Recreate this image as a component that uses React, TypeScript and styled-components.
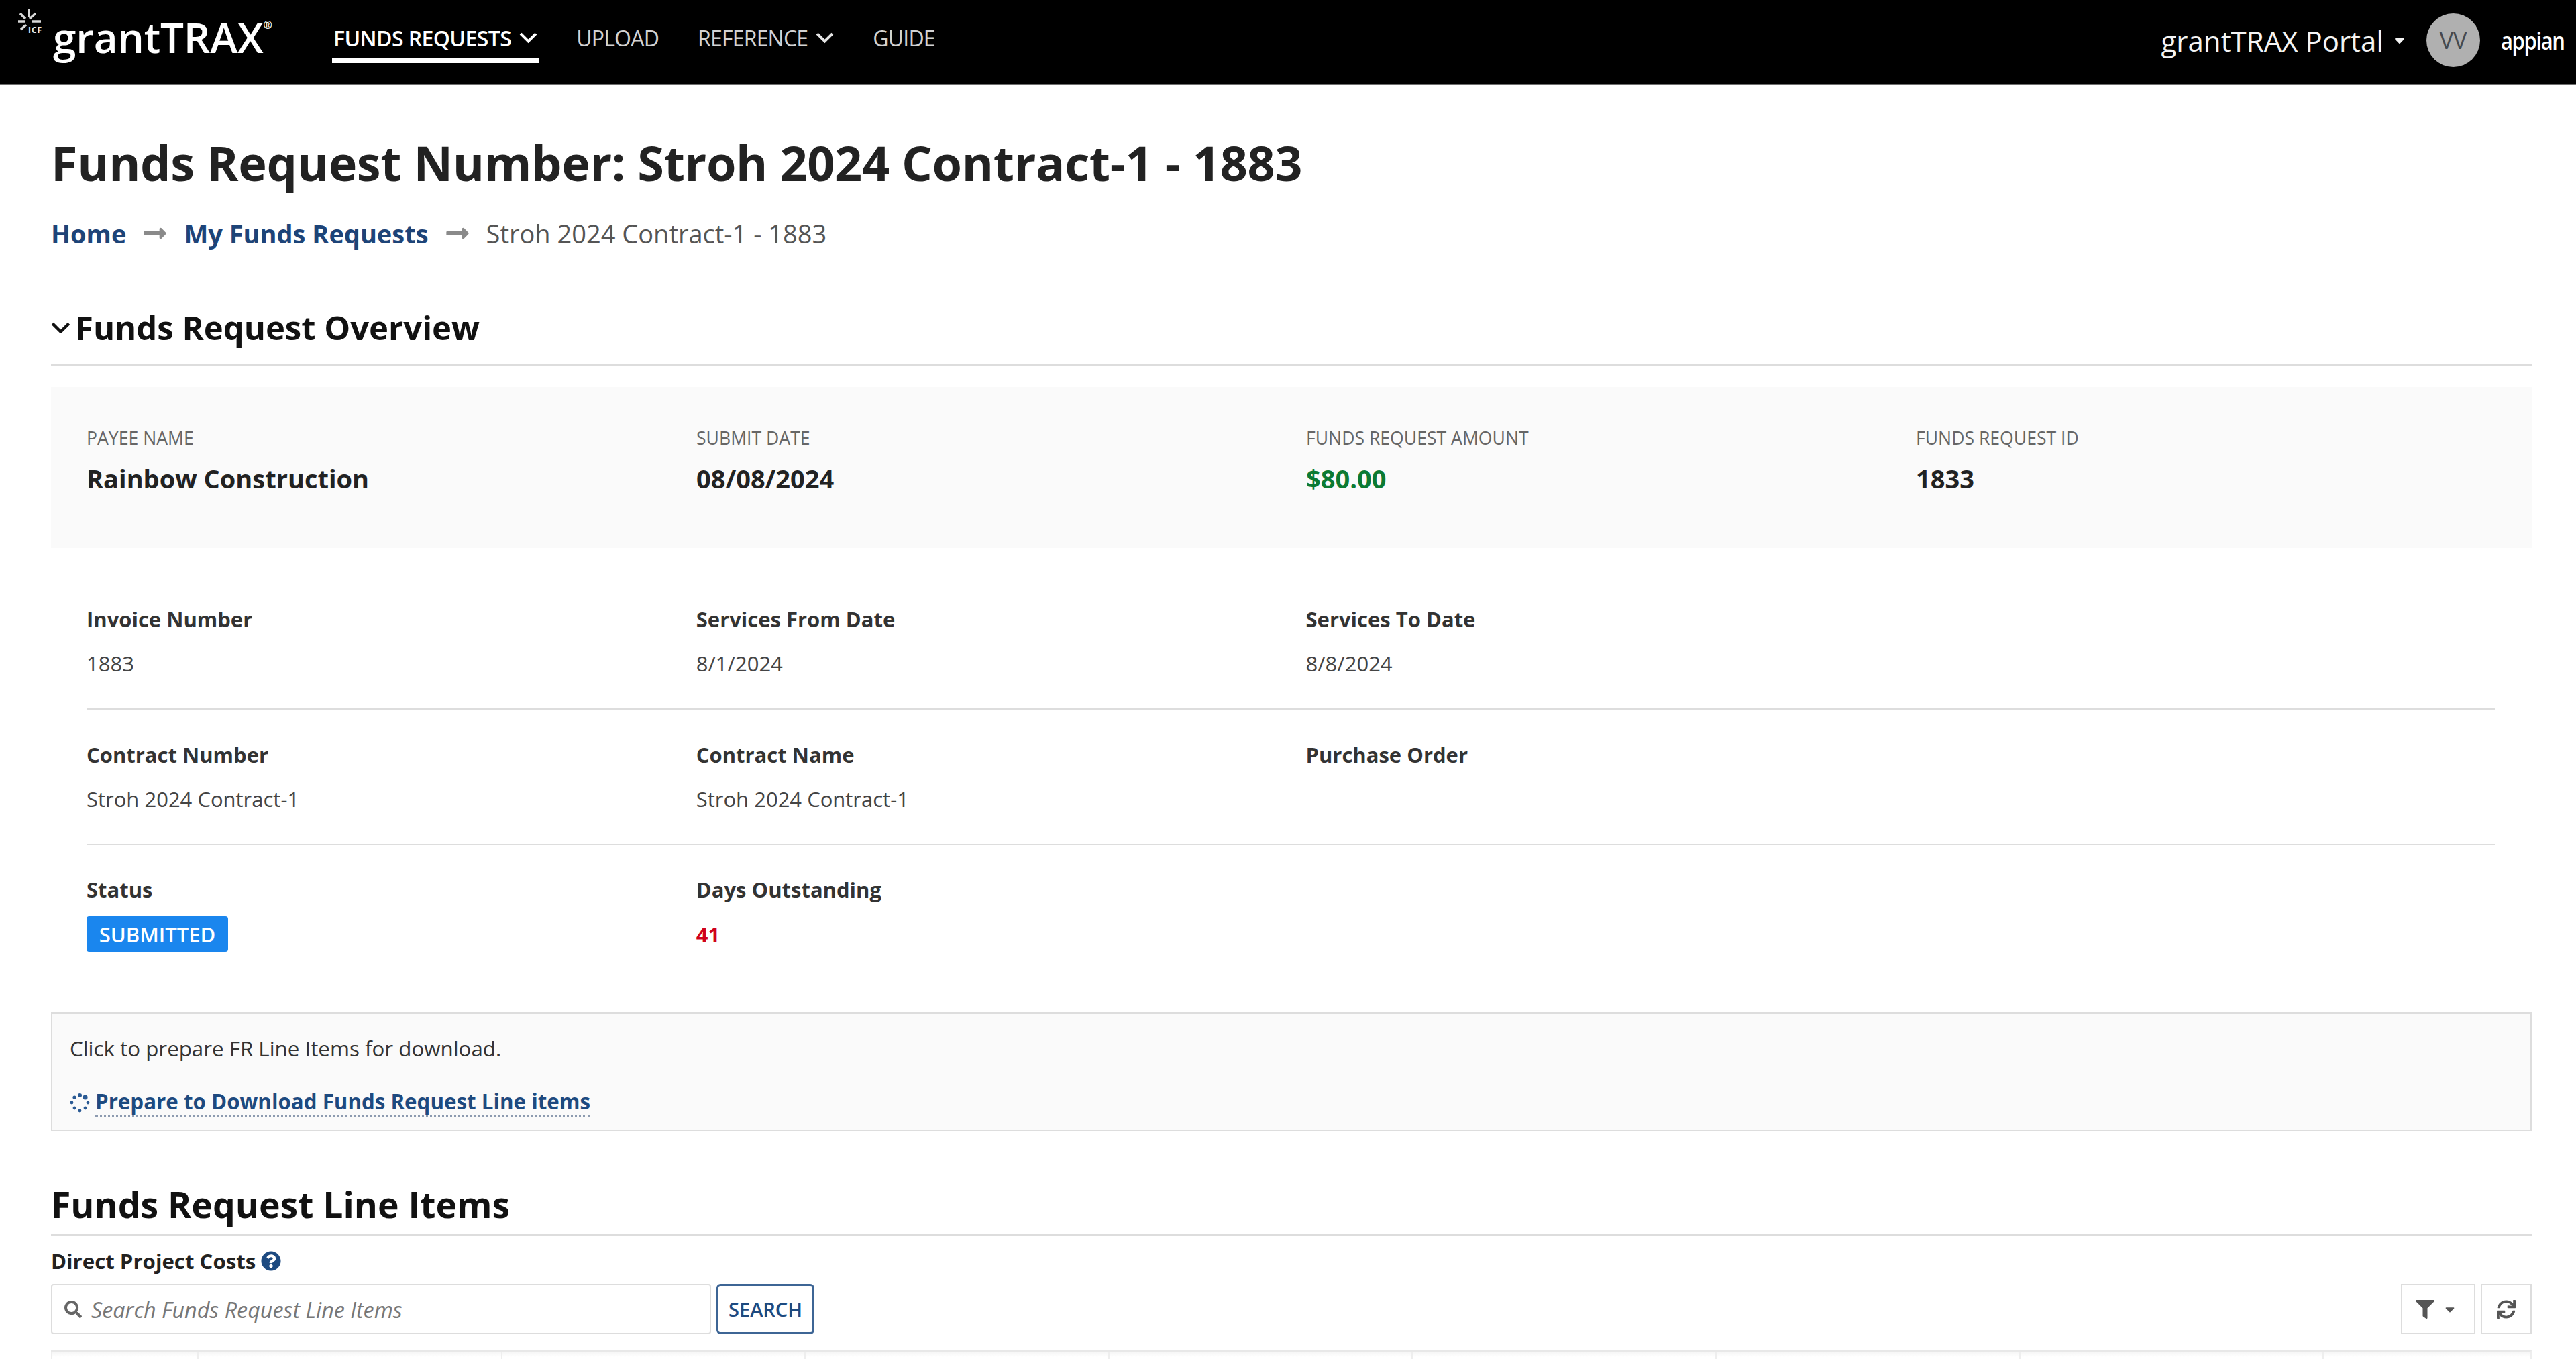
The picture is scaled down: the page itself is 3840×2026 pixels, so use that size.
import React from 'react';
import styled, { createGlobalStyle } from 'styled-components';
import { FaCaretDown, FaFilter, FaLongArrowAltRight, FaQuestionCircle, FaSearch, FaSync } from 'react-icons/fa';

const GlobalStyle = createGlobalStyle`
  html, body {
    margin: 0;
    background: #fff;
    font-family: "Open Sans", "Liberation Sans", sans-serif;
    overflow: hidden;
  }
  * { box-sizing: border-box; }
`;

const Page = styled.div`
  width: 3840px;
  height: 2026px;
  overflow: hidden;
`;

const Header = styled.header`
  display: flex;
  align-items: center;
  height: 127px;
  padding: 0 17px 0 27px;
  background: #000;
  border-bottom: 2px solid #6e6e6e;
`;

const Logo = styled.div`
  display: flex;
  align-items: flex-start;
  width: 468px;
  height: 100%;
  padding-top: 14px;
`;

const LogoName = styled.span`
  margin-left: 2px;
  font-size: 62px;
  font-weight: 600;
  line-height: 82px;
  color: #fff;
  letter-spacing: -0.2px;
`;

const LogoReg = styled.sup`
  font-size: 16px;
  line-height: 1;
  vertical-align: 36px;
`;

const NavList = styled.nav`
  display: flex;
  gap: 54px;
  height: 100%;
`;

const NavItem = styled.a<{ $active?: boolean }>`
  display: flex;
  align-items: center;
  gap: 12px;
  height: 94px;
  padding: 26px 2px 0;
  font-size: 32px;
  font-weight: ${({ $active }) => ($active ? 600 : 400)};
  letter-spacing: ${({ $active }) => ($active ? '-0.6px' : '-0.8px')};
  color: ${({ $active }) => ($active ? '#fff' : '#d2d2d2')};
  border-bottom: 8px solid ${({ $active }) => ($active ? '#fff' : 'transparent')};
`;

const HeaderRight = styled.div`
  display: flex;
  align-items: center;
  margin-left: auto;
  padding-bottom: 5px;
`;

const PortalName = styled.span`
  display: flex;
  align-items: center;
  gap: 12px;
  font-size: 42px;
  font-weight: 500;
  color: #f4f4f4;
`;

const Avatar = styled.div`
  display: flex;
  align-items: center;
  justify-content: center;
  width: 80px;
  height: 80px;
  margin-left: 28px;
  border-radius: 50%;
  background: #b0b0b0;
  font-size: 34px;
  color: #45494f;
`;

const Appian = styled.span`
  width: 95px;
  margin-left: 31px;
  font-size: 36px;
  font-weight: 600;
  letter-spacing: -1.6px;
  color: #fff;
  transform: scaleX(0.86);
  transform-origin: left center;
`;

const Main = styled.main`
  padding: 0 66px 0 76px;
`;

const PageTitle = styled.h1`
  margin: 75px 0 0;
  font-size: 72px;
  font-weight: 700;
  line-height: 80px;
  letter-spacing: -0.35px;
  color: #222;
`;

const Breadcrumbs = styled.div`
  display: flex;
  align-items: center;
  gap: 24px;
  margin-top: 42px;
  font-size: 38px;
  line-height: 48px;
  color: #555;
`;

const Crumb = styled.a`
  font-weight: 700;
  color: #1d4478;
`;

const SectionTitle = styled.h2`
  display: flex;
  align-items: center;
  gap: 7px;
  margin: 84px 0 0;
  padding-bottom: 23px;
  font-size: 49px;
  font-weight: 700;
  line-height: 64px;
  color: #111;
  border-bottom: 2px solid #ddd;
`;

const Summary = styled.section`
  display: grid;
  grid-template-columns: repeat(4, 1fr);
  column-gap: 44px;
  height: 240px;
  margin-top: 32px;
  padding: 58px 53px 0;
  background: #fafafa;
`;

const SummaryLabel = styled.div`
  font-size: 26.6px;
  line-height: 36px;
  color: #666;
`;

const SummaryValue = styled.div<{ $green?: boolean }>`
  margin-top: 18px;
  font-size: 38px;
  font-weight: 700;
  line-height: 48px;
  color: ${({ $green }) => ($green ? '#0b7a33' : '#222')};
`;

const Details = styled.section`
  padding: 88px 54px 0 53px;
`;

const FieldRow = styled.div<{ $divided?: boolean }>`
  display: grid;
  grid-template-columns: repeat(4, 1fr);
  column-gap: 44px;
  padding-bottom: ${({ $divided }) => ($divided ? '47px' : '0')};
  margin-bottom: ${({ $divided }) => ($divided ? '48.5px' : '0')};
  border-bottom: ${({ $divided }) => ($divided ? '2px solid #ddd' : 'none')};
`;

const FieldLabel = styled.div`
  font-size: 31px;
  font-weight: 700;
  line-height: 36px;
  color: #333;
`;

const FieldValue = styled.div<{ $red?: boolean }>`
  margin-top: 28px;
  font-size: 31px;
  font-weight: ${({ $red }) => ($red ? 700 : 400)};
  line-height: 40px;
  color: ${({ $red }) => ($red ? '#d0021b' : '#444')};
`;

const RedWrap = styled.div`
  display: flex;
  align-items: center;
  height: 53px;
  margin-top: 22px;

  ${FieldValue} {
    margin-top: 0;
  }
`;

const Badge = styled.span`
  display: inline-flex;
  align-items: center;
  justify-content: center;
  width: 211px;
  height: 53px;
  margin-top: 22px;
  border-radius: 4px;
  background: #1a86ee;
  font-size: 31px;
  font-weight: 600;
  color: #fff;
`;

const DownloadBox = styled.section`
  height: 177px;
  margin-top: 90px;
  padding: 30px 26px 0;
  background: #fafafa;
  border: 2px solid #ddd;
`;

const DownloadNote = styled.div`
  font-size: 31.3px;
  line-height: 44px;
  color: #333;
`;

const DownloadLink = styled.a`
  display: flex;
  align-items: center;
  gap: 8px;
  margin-top: 37px;
  line-height: 44px;
  font-size: 31.3px;
  font-weight: 700;
  color: #1d4a80;
`;

const DottedText = styled.span`
  border-bottom: 3px dotted #8d9bb0;
  line-height: 40px;
`;

const ItemsTitle = styled.h2`
  margin: 78px 0 0;
  padding-bottom: 12px;
  font-size: 53.5px;
  font-weight: 700;
  line-height: 64px;
  color: #111;
  border-bottom: 2px solid #ddd;
`;

const GroupLabel = styled.div`
  display: flex;
  align-items: center;
  gap: 8px;
  margin-top: 18px;
  font-size: 31.2px;
  font-weight: 700;
  line-height: 40px;
  color: #222;
  svg { color: #1d4a80; }
`;

const Toolbar = styled.div`
  display: flex;
  align-items: stretch;
  gap: 8px;
  height: 75px;
  margin-top: 14px;
`;

const SearchField = styled.div`
  display: flex;
  align-items: center;
  gap: 14px;
  width: 984px;
  padding-left: 18px;
  border: 2px solid #ddd;
  border-radius: 4px;
  font-size: 32.3px;
  font-style: italic;
  color: #777;
  svg { color: #666; }
`;

const SearchButton = styled.button`
  width: 146px;
  padding: 0;
  background: #fff;
  border: 3px solid #3d6595;
  border-radius: 6px;
  font-family: inherit;
  font-size: 29px;
  font-weight: 600;
  color: #1d4a80;
`;

const IconButton = styled.button<{ $width: number; $push?: boolean }>`
  display: flex;
  align-items: center;
  justify-content: center;
  gap: 12px;
  width: ${({ $width }) => $width}px;
  margin-left: ${({ $push }) => ($push ? 'auto' : '0')};
  padding: 0 ${({ $push }) => ($push ? '6px' : '0')} 0 0;
  background: #fff;
  border: 2px solid #ddd;
  color: #555;
`;

const TableHead = styled.div`
  display: grid;
  grid-template-columns: 218px repeat(7, 452.6px) 1fr;
  height: 40px;
  margin-top: 24px;
  border-top: 2px solid #e8e8e8;
  border-right: 2px solid #eee;
  background: linear-gradient(#f5f5f5, #fff 8px);
`;

const TableCell = styled.div`
  border-left: 2px solid #eee;
`;

const summary = [
  { label: 'PAYEE NAME', value: 'Rainbow Construction' },
  { label: 'SUBMIT DATE', value: '08/08/2024' },
  { label: 'FUNDS REQUEST AMOUNT', value: '$80.00', green: true },
  { label: 'FUNDS REQUEST ID', value: '1833' },
];

const rows = [
  [
    { label: 'Invoice Number', value: '1883' },
    { label: 'Services From Date', value: '8/1/2024' },
    { label: 'Services To Date', value: '8/8/2024' },
  ],
  [
    { label: 'Contract Number', value: 'Stroh 2024 Contract-1' },
    { label: 'Contract Name', value: 'Stroh 2024 Contract-1' },
    { label: 'Purchase Order', value: '' },
  ],
];

function Chevron({ size, color }: { size: number; color: string }) {
  return (
    <svg width={size} height={size * 0.65} viewBox="0 0 26 17" fill="none">
      <path d="M2 3l11 11L24 3" stroke={color} strokeWidth="4" />
    </svg>
  );
}

function IcfMark() {
  return (
    <svg width="50" height="56" viewBox="0 0 50 56">
      <g stroke="#d8d8d8" strokeWidth="3.5">
        <path d="M16 0v12M3 6l8 8M26 6l-9 8M-2 18h13M34 18H20M4 30l8-7" />
      </g>
      <text x="15" y="35" fontFamily="Open Sans" fontSize="12" fontWeight="700" letterSpacing="1" fill="#e8e8e8">
        ICF
      </text>
    </svg>
  );
}

function Spinner() {
  const dots = [
    [15, 4, 3],
    [23, 7, 3.6],
    [27, 15, 2.4],
    [23, 23, 2.4],
    [15, 27, 2.4],
    [7, 23, 2.4],
    [3, 15, 2.4],
    [7, 7, 2.6],
  ];
  return (
    <svg width="30" height="30" viewBox="0 0 30 30">
      {dots.map(([cx, cy, r]) => (
        <circle key={`${cx}-${cy}`} cx={cx} cy={cy} r={r} fill="#2a5a94" />
      ))}
    </svg>
  );
}

export default function App() {
  return (
    <Page>
      <GlobalStyle />
      <Header>
        <Logo>
          <IcfMark />
          <LogoName>
            grantTRAX<LogoReg>®</LogoReg>
          </LogoName>
        </Logo>
        <NavList>
          <NavItem $active>
            FUNDS REQUESTS <Chevron size={27} color="#fff" />
          </NavItem>
          <NavItem>UPLOAD</NavItem>
          <NavItem>
            REFERENCE <Chevron size={27} color="#e4e4e4" />
          </NavItem>
          <NavItem>GUIDE</NavItem>
        </NavList>
        <HeaderRight>
          <PortalName>
            grantTRAX Portal <FaCaretDown size={24} />
          </PortalName>
          <Avatar>VV</Avatar>
          <Appian>appian</Appian>
        </HeaderRight>
      </Header>
      <Main>
        <PageTitle>Funds Request Number: Stroh 2024 Contract-1 - 1883</PageTitle>
        <Breadcrumbs>
          <Crumb>Home</Crumb>
          <FaLongArrowAltRight size={38} color="#8a8a8a" />
          <Crumb>My Funds Requests</Crumb>
          <FaLongArrowAltRight size={38} color="#8a8a8a" />
          <span>Stroh 2024 Contract-1 - 1883</span>
        </Breadcrumbs>
        <SectionTitle>
          <Chevron size={29} color="#111" />
          Funds Request Overview
        </SectionTitle>
        <Summary>
          {summary.map((item) => (
            <div key={item.label}>
              <SummaryLabel>{item.label}</SummaryLabel>
              <SummaryValue $green={item.green}>{item.value}</SummaryValue>
            </div>
          ))}
        </Summary>
        <Details>
          {rows.map((row) => (
            <FieldRow $divided key={row[0].label}>
              {row.map((field) => (
                <div key={field.label}>
                  <FieldLabel>{field.label}</FieldLabel>
                  {field.value && <FieldValue>{field.value}</FieldValue>}
                </div>
              ))}
            </FieldRow>
          ))}
          <FieldRow>
            <div>
              <FieldLabel>Status</FieldLabel>
              <Badge>SUBMITTED</Badge>
            </div>
            <div>
              <FieldLabel>Days Outstanding</FieldLabel>
              <RedWrap>
                <FieldValue $red>41</FieldValue>
              </RedWrap>
            </div>
          </FieldRow>
        </Details>
        <DownloadBox>
          <DownloadNote>Click to prepare FR Line Items for download.</DownloadNote>
          <DownloadLink>
            <Spinner />
            <DottedText>Prepare to Download Funds Request Line items</DottedText>
          </DownloadLink>
        </DownloadBox>
        <ItemsTitle>Funds Request Line Items</ItemsTitle>
        <GroupLabel>
          Direct Project Costs <FaQuestionCircle size={30} />
        </GroupLabel>
        <Toolbar>
          <SearchField>
            <FaSearch size={26} />
            Search Funds Request Line Items
          </SearchField>
          <SearchButton>SEARCH</SearchButton>
          <IconButton $width={111} $push>
            <FaFilter size={28} />
            <FaCaretDown size={22} />
          </IconButton>
          <IconButton $width={76}>
            <FaSync size={28} />
          </IconButton>
        </Toolbar>
        <TableHead>
          {Array.from({ length: 9 }, (_, i) => (
            <TableCell key={i} />
          ))}
        </TableHead>
      </Main>
    </Page>
  );
}
